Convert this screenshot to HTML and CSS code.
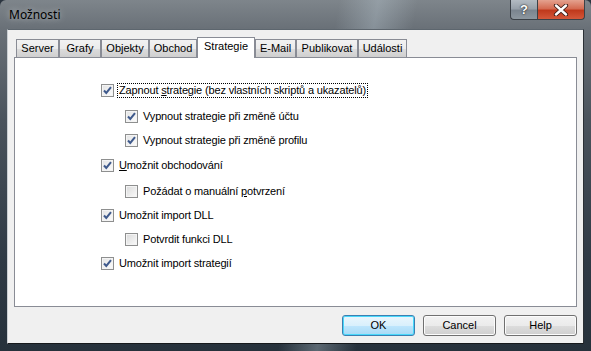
FILE: index.html
```html
<!DOCTYPE html>
<html>
<head>
<meta charset="utf-8">
<link rel="stylesheet" href="styles.css">
</head>
<body>
<div class="window">
  <div class="titlebar">
    <div class="title">Možnosti</div>
    <div class="caption-buttons">
      <div class="cap-btn help-btn">?</div>
      <div class="cap-btn close-btn">
        <svg width="16" height="12" viewBox="0 0 16 12"><path d="M3 1.5 L13 10.5 M13 1.5 L3 10.5" stroke="#3a1a14" stroke-width="4.2" stroke-linecap="round"/><path d="M3 1.5 L13 10.5 M13 1.5 L3 10.5" stroke="#ffffff" stroke-width="2.4" stroke-linecap="round"/></svg>
      </div>
    </div>
  </div>
  <div class="client">
    <div class="tabs">
      <div class="tab t-server">Server</div>
      <div class="tab t-grafy">Grafy</div>
      <div class="tab t-objekty">Objekty</div>
      <div class="tab t-obchod">Obchod</div>
      <div class="tab t-strategie selected">Strategie</div>
      <div class="tab t-email">E-Mail</div>
      <div class="tab t-publikovat">Publikovat</div>
      <div class="tab t-udalosti">Události</div>
    </div>
    <div class="panel">
      <div class="row first">
        <span class="cb checked"><svg width="11" height="11" viewBox="0 0 11 11"><path d="M2 5.5 L4.3 8 L9 2.2" fill="none" stroke="#3f5a8c" stroke-width="2"/></svg></span>
        <span class="label focus">Zapnout <u>s</u>trategie (bez vlastních skriptů a ukazatelů)</span>
      </div>
      <div class="row sub g2">
        <span class="cb checked"><svg width="11" height="11" viewBox="0 0 11 11"><path d="M2 5.5 L4.3 8 L9 2.2" fill="none" stroke="#3f5a8c" stroke-width="2"/></svg></span>
        <span class="label">Vypnout strategie při změně účtu</span>
      </div>
      <div class="row sub">
        <span class="cb checked"><svg width="11" height="11" viewBox="0 0 11 11"><path d="M2 5.5 L4.3 8 L9 2.2" fill="none" stroke="#3f5a8c" stroke-width="2"/></svg></span>
        <span class="label">Vypnout strategie při změně profilu</span>
      </div>
      <div class="row g1">
        <span class="cb checked"><svg width="11" height="11" viewBox="0 0 11 11"><path d="M2 5.5 L4.3 8 L9 2.2" fill="none" stroke="#3f5a8c" stroke-width="2"/></svg></span>
        <span class="label"><u>U</u>možnit obchodování</span>
      </div>
      <div class="row sub g2">
        <span class="cb"></span>
        <span class="label">Požádat o manuální <u>p</u>otvrzení</span>
      </div>
      <div class="row">
        <span class="cb checked"><svg width="11" height="11" viewBox="0 0 11 11"><path d="M2 5.5 L4.3 8 L9 2.2" fill="none" stroke="#3f5a8c" stroke-width="2"/></svg></span>
        <span class="label">Umožnit import DLL</span>
      </div>
      <div class="row sub">
        <span class="cb"></span>
        <span class="label">Potvrdit funkci DLL</span>
      </div>
      <div class="row">
        <span class="cb checked"><svg width="11" height="11" viewBox="0 0 11 11"><path d="M2 5.5 L4.3 8 L9 2.2" fill="none" stroke="#3f5a8c" stroke-width="2"/></svg></span>
        <span class="label">Umožnit import strategií</span>
      </div>
    </div>
    <div class="buttons">
      <div class="btn default">OK</div>
      <div class="btn">Cancel</div>
      <div class="btn">Help</div>
    </div>
  </div>
</div>
</body>
</html>
```

FILE: styles.css
```css
html, body {
  margin: 0;
  padding: 0;
  background: #2b3540;
}
.window {
  width: 591px;
  height: 351px;
  box-sizing: border-box;
  padding: 0 7px 7px 7px;
  display: flex;
  flex-direction: column;
  background:
    linear-gradient(100deg, rgba(255,255,255,0) 0%, rgba(255,255,255,0) 52%, rgba(190,205,215,0.35) 58%, rgba(255,255,255,0) 64%, rgba(255,255,255,0) 100%),
    linear-gradient(180deg, #7e858b 0px, #6a7178 28px, #4a535c 120px, #2f3a45 260px, #26313b 351px);
  border-radius: 6px 6px 0 0;
  font-family: "Liberation Sans", Arial, sans-serif;
  font-size: 11px;
  color: #000;
}
.titlebar {
  height: 29px;
  display: flex;
  justify-content: space-between;
  align-items: flex-start;
  padding-left: 2px;
}
.title {
  font-family: "Noto Sans", "Open Sans", sans-serif;
  font-size: 12px;
  line-height: 29px;
  color: #000;
  text-shadow: 0 0 6px rgba(255,255,255,0.6);
}
.caption-buttons {
  display: flex;
  margin-right: -1px;
}
.cap-btn {
  height: 20px;
  box-sizing: border-box;
  border: 1px solid #3b4147;
  border-top: none;
  display: flex;
  align-items: center;
  justify-content: center;
}
.help-btn {
  width: 27px;
  border-radius: 0 0 0 4px;
  border-right: none;
  background: linear-gradient(180deg, #b3bbc2 0%, #98a1aa 45%, #7b858f 55%, #8d979f 100%);
  color: #fff;
  font-family: "Liberation Sans", Arial, sans-serif;
  font-weight: bold;
  font-size: 13px;
  text-shadow: 0 0 2px #222, 0 0 1px #222;
}
.close-btn {
  width: 48px;
  border-radius: 0 0 4px 0;
  background: linear-gradient(180deg, #e4a28f 0%, #d46b52 45%, #c0391c 55%, #d4583a 100%);
}
.client {
  flex: 1;
  background: #f0f0f0;
  border: 1px solid;
  border-color: #5d666e #2b3035 #16191c #c9ced2;
  display: flex;
  flex-direction: column;
  padding: 7px 6px 7px 6px;
}
.tabs {
  display: flex;
  align-items: flex-end;
  height: 21px;
  margin-bottom: -1px;
  padding-left: 2px;
  position: relative;
  z-index: 1;
}
.tab {
  height: 18px;
  box-sizing: border-box;
  margin-bottom: 1px;
  border: 1px solid #898c95;
  border-bottom: none;
  text-align: center;
  line-height: 17px;
  background: linear-gradient(180deg, #f2f2f2 0%, #ebebeb 50%, #dddddd 51%, #cfcfcf 100%);
}
.t-server { width: 43px; }
.t-grafy { width: 42px; }
.t-objekty { width: 48px; }
.t-obchod { width: 48px; }
.t-strategie { width: 58px; }
.t-email { width: 41px; }
.t-publikovat { width: 62px; }
.t-udalosti { width: 49px; }
.tab.selected {
  height: 21px;
  margin-bottom: 0;
  background: #fff;
  line-height: 17px;
}
.panel {
  flex: 1;
  background: #fff;
  border: 1px solid #898c95;
  display: flex;
  flex-direction: column;
  padding: 26px 0 0 86px;
}
.row {
  display: flex;
  align-items: center;
  height: 13px;
  margin-top: 11px;
}
.row.first { margin-top: 0; }
.row.g1 { margin-top: 12px; }
.row.g2 { margin-top: 13px; }
.row.sub { padding-left: 24px; }
.cb {
  width: 13px;
  height: 13px;
  box-sizing: border-box;
  border: 1px solid #8e8f8f;
  background: linear-gradient(135deg, #d9dadb 0%, #eaeaea 50%, #fbfbfb 100%);
  box-shadow: inset 0 0 0 1px #f4f4f4;
  display: flex;
  align-items: center;
  justify-content: center;
  flex: none;
}
.cb.checked {
  background: linear-gradient(135deg, #e2e3e4 0%, #f0f0f0 50%, #fcfcfc 100%);
}
.cb svg { display: block; }
.label {
  margin-left: 3px;
  padding: 0 1px;
  line-height: 13px;
  white-space: nowrap;
  letter-spacing: -0.15px;
  border: 1px dotted transparent;
}
.label.focus {
  border-color: #000;
}
.buttons {
  display: flex;
  justify-content: flex-end;
  gap: 8px;
  margin-top: 8px;
}
.btn {
  width: 73px;
  height: 21px;
  box-sizing: border-box;
  border: 1px solid #707070;
  border-radius: 3px;
  background: linear-gradient(180deg, #f2f2f2 0%, #ebebeb 50%, #dddddd 51%, #cfcfcf 100%);
  box-shadow: inset 0 0 0 1px #fcfcfc;
  text-align: center;
  line-height: 19px;
}
.btn.default {
  border-color: #3c7fb1;
  box-shadow: inset 0 0 0 1px #48d8fb;
  background: linear-gradient(180deg, #eaf6fd 0%, #d9f0fc 50%, #bee6fd 51%, #a7d9f5 100%);
}
```
